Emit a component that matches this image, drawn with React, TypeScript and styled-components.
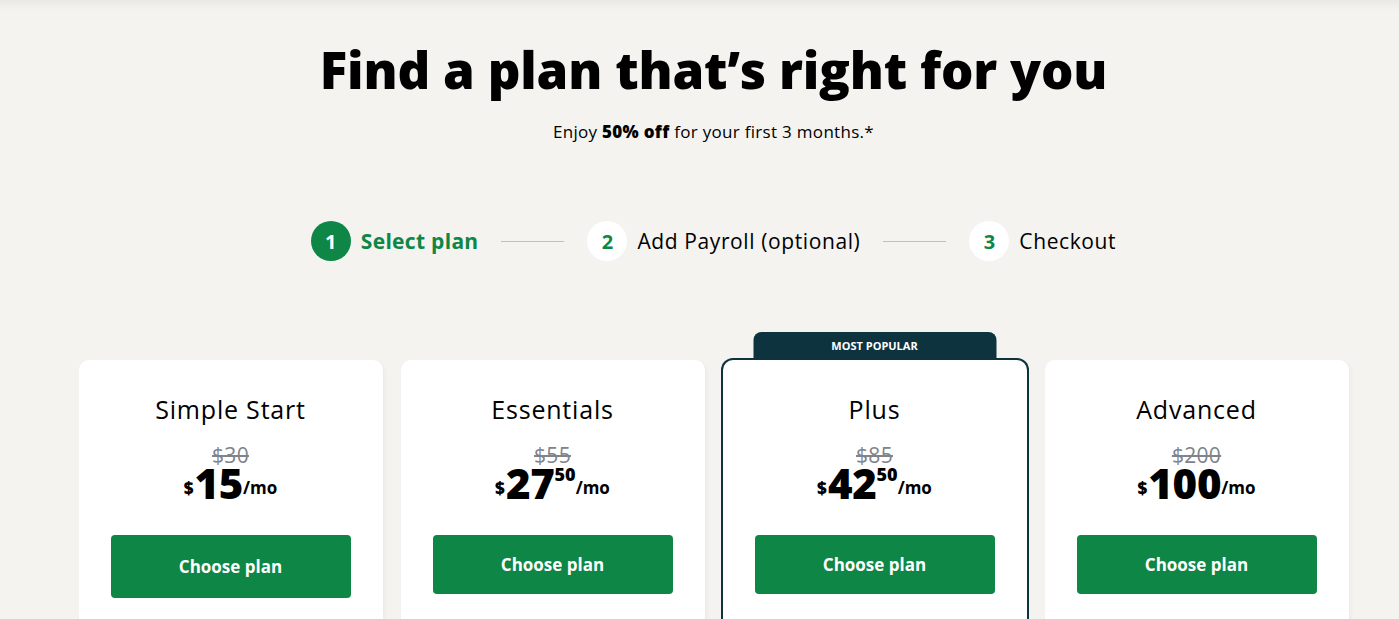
import React from "react";
import styled, { createGlobalStyle } from "styled-components";

const GlobalStyle = createGlobalStyle`
  html, body { margin: 0; padding: 0; background: #f4f3f0; overflow: hidden; }
  body { font-family: "Open Sans", Lato, sans-serif; color: #000; }
  * { box-sizing: border-box; }
`;

const Page = styled.div`
  position: relative;
  width: 1427px;
  min-height: 619px;
  padding: 35px 79px 0;
  display: flex;
  flex-direction: column;
  align-items: center;
  &::before {
    content: "";
    position: absolute;
    left: 0; right: 0; top: 0;
    height: 10px;
    background: linear-gradient(rgba(0,0,0,0.045), rgba(0,0,0,0));
  }
`;

const Title = styled.h1`
  margin: 0;
  font-size: 51px;
  line-height: 68px;
  font-weight: 800;
  letter-spacing: -0.2px;
`;

const Subtitle = styled.p`
  margin: 18px 0 0;
  font-size: 17px;
  line-height: 22px;
  letter-spacing: 0.3px;
  b { font-weight: 800; }
`;

const Steps = styled.ol`
  list-style: none;
  margin: 78px 0 0;
  padding: 0;
  display: flex;
  align-items: center;
  gap: 23px;
`;

const Step = styled.li<{ $active?: boolean }>`
  display: flex;
  align-items: center;
  gap: 10px;
  font-size: 21px;
  letter-spacing: ${(p) => (p.$active ? 0.3 : 0.6)}px;
  font-weight: ${(p) => (p.$active ? 700 : 400)};
  color: ${(p) => (p.$active ? "#0d8646" : "#000")};
`;

const StepNum = styled.span<{ $active?: boolean }>`
  width: 40px;
  height: 40px;
  border-radius: 50%;
  display: flex;
  align-items: center;
  justify-content: center;
  font-size: 20px;
  font-weight: 700;
  letter-spacing: 0;
  background: ${(p) => (p.$active ? "#0d8646" : "#fff")};
  color: ${(p) => (p.$active ? "#fff" : "#0d8646")};
`;

const Line = styled.li`
  width: 63px;
  height: 1px;
  background: #9ed4b4;
`;

const Cards = styled.div`
  margin-top: 99px;
  display: grid;
  grid-template-columns: repeat(4, 304px);
  gap: 18px;
  align-items: start;
`;

const Card = styled.div<{ $popular?: boolean }>`
  position: relative;
  background: #fff;
  border-radius: 10px;
  height: 280px;
  padding: 33px 32px 0;
  display: flex;
  flex-direction: column;
  align-items: center;
  box-shadow: ${(p) =>
    p.$popular ? "0 0 0 2px #0d333f" : "2px 2px 4px rgba(0,0,0,0.04)"};
`;

const Tag = styled.div`
  position: absolute;
  top: -28px;
  left: 50%;
  transform: translateX(-50%);
  width: 243px;
  height: 28px;
  padding-top: 6px;
  border-radius: 8px 8px 0 0;
  background: #0d333f;
  color: #fff;
  font-size: 11px;
  line-height: 15px;
  font-weight: 700;
  text-align: center;
`;

const PlanName = styled.h2`
  margin: 0;
  font-size: 25px;
  line-height: 32px;
  font-weight: 500;
  letter-spacing: 0.8px;
`;

const OldPrice = styled.s`
  margin-top: 20px;
  font-size: 21px;
  line-height: 20px;
  letter-spacing: 0.3px;
  color: #80838a;
`;

const Price = styled.div`
  display: flex;
  align-items: flex-start;
  font-weight: 800;
  line-height: 1;
`;

const Currency = styled.span`
  font-size: 17px;
  margin-top: 14px;
  margin-right: 1px;
`;

const Amount = styled.span`
  font-size: 42px;
  line-height: 36px;
  letter-spacing: -0.3px;
`;

const Cents = styled.span`
  font-size: 18px;
  margin-top: 0;
`;

const Per = styled.span`
  font-size: 17px;
  font-weight: 700;
  margin-top: 14px;
`;

const Button = styled.button<{ $tall?: boolean }>`
  margin-top: 34px;
  width: 240px;
  height: ${(p) => (p.$tall ? 63 : 59)}px;
  border: none;
  border-radius: 4px;
  background: #0d8646;
  color: #fff;
  font-family: inherit;
  font-size: 17px;
  font-weight: 700;
  cursor: pointer;
`;

type Plan = {
  name: string;
  old: string;
  amount: string;
  cents?: string;
  popular?: boolean;
  tall?: boolean;
};

const plans: Plan[] = [
  { name: "Simple Start", old: "$30", amount: "15", tall: true },
  { name: "Essentials", old: "$55", amount: "27", cents: "50" },
  { name: "Plus", old: "$85", amount: "42", cents: "50", popular: true },
  { name: "Advanced", old: "$200", amount: "100" },
];

export default function App() {
  return (
    <>
      <GlobalStyle />
      <Page>
        <Title>Find a plan that’s right for you</Title>
        <Subtitle>
          Enjoy <b>50% off</b> for your first 3 months.*
        </Subtitle>
        <Steps>
          <Step $active>
            <StepNum $active>1</StepNum>
            Select plan
          </Step>
          <Line />
          <Step>
            <StepNum>2</StepNum>
            Add Payroll (optional)
          </Step>
          <Line />
          <Step>
            <StepNum>3</StepNum>
            Checkout
          </Step>
        </Steps>
        <Cards>
          {plans.map((p) => (
            <Card key={p.name} $popular={p.popular}>
              {p.popular && <Tag>MOST POPULAR</Tag>}
              <PlanName>{p.name}</PlanName>
              <OldPrice>{p.old}</OldPrice>
              <Price>
                <Currency>$</Currency>
                <Amount>{p.amount}</Amount>
                {p.cents && <Cents>{p.cents}</Cents>}
                <Per>/mo</Per>
              </Price>
              <Button $tall={p.tall}>Choose plan</Button>
            </Card>
          ))}
        </Cards>
      </Page>
    </>
  );
}
